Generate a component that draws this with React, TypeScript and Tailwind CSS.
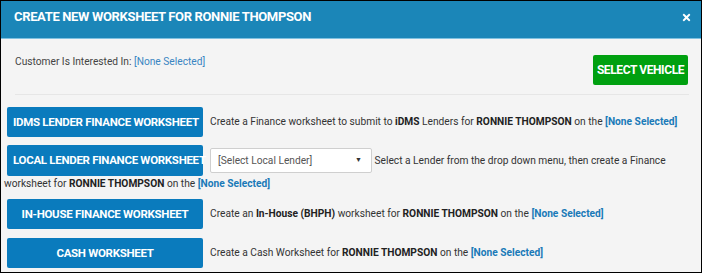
import React from "react";
import { FaTimes } from "react-icons/fa";

const Btn = ({ children }: { children: React.ReactNode }) => (
  <div className="inline-block shrink-0 align-middle w-[196px] h-[30px] bg-[#0a7bbd] rounded-[2px] text-white font-bold text-[11.5px] leading-[30px] text-center whitespace-nowrap px-[6px] tracking-[-0.3px]">
    {children}
  </div>
);

const Link = ({ children }: { children: React.ReactNode }) => (
  <span className="font-bold text-[#1a7ab8]">{children}</span>
);

export default function App() {
  return (
    <div
      className="w-[702px] h-[273px] border border-black bg-[#f4f4f4] overflow-hidden text-[#333]"
      style={{ fontFamily: "Roboto, 'Liberation Sans', sans-serif" }}
    >
      <div className="h-[38px] bg-[#1b86b8] border-b border-[#7fc1e0] flex items-center justify-between pl-[13px] pr-[9px]">
        <div className="text-white font-bold text-[13px] tracking-[-0.35px] mt-[-6px]">
          CREATE NEW WORKSHEET FOR RONNIE THOMPSON
        </div>
        <FaTimes className="text-white w-[11px] h-[11px] mt-[-4px]" />
      </div>
      <div className="pl-[14px] pr-[12px]">
        <div className="flex justify-between items-start pt-[16px] pb-[9px] border-b border-[#e6e6e6]">
          <div className="text-[10.2px] leading-[13px] text-[#444]">
            Customer Is Interested In: <span className="text-[#3a85c2]">[None Selected]</span>
          </div>
          <div className="w-[95px] h-[30px] bg-[#00a010] rounded-[2px] text-white font-bold text-[12px] leading-[30px] text-center tracking-[-0.4px] mr-[1px]">
            SELECT VEHICLE
          </div>
        </div>
      </div>
      <div className="pl-[3px] pr-[8px] pt-[12px] text-[10.2px]">
        <div className="pl-[3px] flex items-center h-[30px]">
          <Btn>IDMS LENDER FINANCE WORKSHEET</Btn>
          <span className="ml-[7px] whitespace-nowrap">
            Create a Finance worksheet to submit to <b className="text-[#222]">iDMS</b> Lenders for{" "}
            <b className="text-[#222]">RONNIE THOMPSON</b> on the <Link>[None Selected]</Link>
          </span>
        </div>
        <div className="mt-[8px] leading-[13px]">
          <span className="pl-[3px]" />
          <div className="inline-block align-middle w-[196px] h-[31px] bg-[#0a7bbd] rounded-[2px] text-white font-bold text-[11.5px] leading-[31px] text-left whitespace-nowrap pl-[6px] tracking-[-0.3px]">
            LOCAL LENDER FINANCE WORKSHEET
          </div>
          <div className="inline-flex align-middle ml-[7px] w-[162px] h-[25px] bg-white border border-[#cfcfcf] rounded-[2px] items-center justify-between pl-[7px] pr-[9px] text-[#555]">
            <span>[Select Local Lender]</span>
            <span className="text-[7px] text-[#333]">▼</span>
          </div>
          <span className="align-middle">
            {" "}Select a Lender from the drop down menu, then create a Finance worksheet for{" "}
            <b className="text-[#222]">RONNIE THOMPSON</b> on the <Link>[None Selected]</Link>
          </span>
        </div>
        <div className="pl-[3px] mt-[9px] flex items-center h-[30px]">
          <Btn>IN-HOUSE FINANCE WORKSHEET</Btn>
          <span className="ml-[7px] whitespace-nowrap">
            Create an <b className="text-[#222]">In-House (BHPH)</b> worksheet for{" "}
            <b className="text-[#222]">RONNIE THOMPSON</b> on the <Link>[None Selected]</Link>
          </span>
        </div>
        <div className="pl-[3px] mt-[9px] flex items-center h-[30px]">
          <Btn>CASH WORKSHEET</Btn>
          <span className="ml-[7px] whitespace-nowrap">
            Create a Cash Worksheet for <b className="text-[#222]">RONNIE THOMPSON</b> on the{" "}
            <Link>[None Selected]</Link>
          </span>
        </div>
      </div>
    </div>
  );
}
